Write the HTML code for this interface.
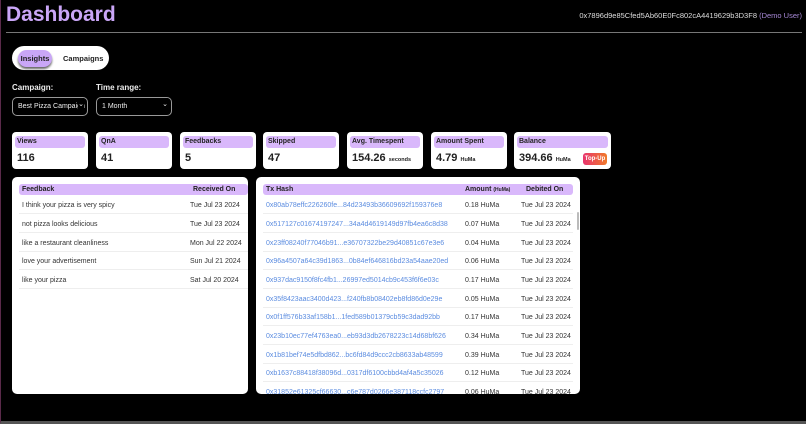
<!DOCTYPE html>
<html><head><style>
*{box-sizing:border-box;margin:0;padding:0}
body{width:806px;height:424px;background:#000;font-family:"Liberation Sans","DejaVu Sans",sans-serif;position:relative;overflow:hidden;color:#222}
.frame{position:absolute;left:0;top:0;width:806px;height:424px;border-left:1px solid #5a2a4a;border-bottom:3px solid #555}
h1{position:absolute;left:6px;top:3px;font-size:21px;font-weight:bold;color:#caa6f7}
.addr{position:absolute;right:4px;top:11px;font-size:7.5px;color:#ddd}
.addr span{color:#a889d8}
.hr{position:absolute;left:6px;top:32px;width:796px;height:1px;background:#777}
.tog{position:absolute;left:12px;top:46px;width:97px;height:24px;background:#fff;border-radius:12px}
.tog .a{position:absolute;left:6px;top:4px;width:34px;height:17px;background:#c9a6f7;border-radius:9px;font-size:7.5px;font-weight:bold;text-align:center;line-height:17px;box-shadow:0 2px 2px #666}
.tog .b{position:absolute;left:51px;top:4px;font-size:7.5px;font-weight:bold;line-height:17px}
.lbl{position:absolute;top:83px;font-size:8px;font-weight:bold;color:#eee}
.sel{position:absolute;top:97px;width:76px;height:19px;border:1px solid #999;border-radius:5px;color:#eee;font-size:7px;line-height:17px;padding-left:5px;white-space:nowrap;overflow:hidden}
.sel:after{content:"⌄";position:absolute;right:3px;top:-2px;font-size:7px;background:#000}
.card{position:absolute;top:132px;height:37px;background:#fff;border-radius:4px;width:76px}
.card .h{position:absolute;left:3px;top:4px;right:3px;height:12px;background:#d9b8fb;border-radius:3px;font-size:7px;font-weight:bold;padding-left:2px;line-height:12px}
.card .v{position:absolute;left:5px;top:20px;font-size:11px;font-weight:bold}
.card .v small{font-size:5.5px}
.topup{position:absolute;right:4px;top:21px;width:24px;height:12px;border-radius:3px;background:linear-gradient(90deg,#e8346e,#f07a2a);color:#fff;font-size:6px;font-weight:bold;text-align:center;line-height:12px}
.panel{position:absolute;top:177px;height:217px;background:#fff;border-radius:5px;overflow:hidden}
.ph{position:absolute;top:7px;height:11px;background:#d9b8fb;border-radius:3px;font-size:7px;font-weight:bold;line-height:11px}
.row{position:absolute;height:18.7px;border-bottom:1px solid #eee;font-size:7px;line-height:21px;color:#333}
.row span{position:absolute}
.tx{color:#5b8ce0}
</style></head><body>
<div class="frame"></div>
<h1>Dashboard</h1>
<div class="addr">0x7896d9e85Cfed5Ab60E0Fc802cA4419629b3D3F8 <span>(Demo User)</span></div>
<div class="hr"></div>
<div class="tog"><div class="a">Insights</div><div class="b">Campaigns</div></div>
<div class="lbl" style="left:12px">Campaign:</div>
<div class="lbl" style="left:96px">Time range:</div>
<div class="sel" style="left:12px">Best Pizza Campaign</div>
<div class="sel" style="left:96px">1 Month</div>
<div class="card" style="left:12px"><div class="h">Views</div><div class="v">116</div></div>
<div class="card" style="left:96px"><div class="h">QnA</div><div class="v">41</div></div>
<div class="card" style="left:180px"><div class="h">Feedbacks</div><div class="v">5</div></div>
<div class="card" style="left:263px"><div class="h">Skipped</div><div class="v">47</div></div>
<div class="card" style="left:347px"><div class="h">Avg. Timespent</div><div class="v">154.26 <small>seconds</small></div></div>
<div class="card" style="left:431px"><div class="h">Amount Spent</div><div class="v">4.79 <small>HuMa</small></div></div>
<div class="card" style="left:514px;width:97px"><div class="h">Balance</div><div class="v">394.66 <small>HuMa</small></div><div class="topup">Top-Up</div></div>

<div class="panel" style="left:12px;width:236px">
<div class="ph" style="left:7px;width:229px"><span style="position:absolute;left:3px">Feedback</span><span style="position:absolute;left:174px">Received On</span></div>
<div class="row" style="left:7px;width:229px;top:18px"><span style="left:3px">I think your pizza is very spicy</span><span style="left:171px">Tue Jul 23 2024</span></div>
<div class="row" style="left:7px;width:229px;top:37px"><span style="left:3px">not pizza looks delicious</span><span style="left:171px">Tue Jul 23 2024</span></div>
<div class="row" style="left:7px;width:229px;top:56px"><span style="left:3px">like a restaurant cleanliness</span><span style="left:171px">Mon Jul 22 2024</span></div>
<div class="row" style="left:7px;width:229px;top:74px"><span style="left:3px">love your advertisement</span><span style="left:171px">Sun Jul 21 2024</span></div>
<div class="row" style="left:7px;width:229px;top:93px"><span style="left:3px">like your pizza</span><span style="left:171px">Sat Jul 20 2024</span></div>
</div>

<div class="panel" style="left:256px;width:324px">
<div class="ph" style="left:7px;width:310px"><span style="position:absolute;left:3px">Tx Hash</span><span style="position:absolute;left:202px">Amount <small style="font-size:5px">(HuMa)</small></span><span style="position:absolute;left:263px">Debited On</span></div>
<div class="row" style="left:7px;width:310px;top:18px"><span class="tx" style="left:3px">0x80ab78effc226260fe...84d23493b36609692f159376e8</span><span style="left:202px">0.18 HuMa</span><span style="left:258px">Tue Jul 23 2024</span></div>
<div class="row" style="left:7px;width:310px;top:37px"><span class="tx" style="left:3px">0x517127c01674197247...34a4d4619149d97fb4ea6c8d38</span><span style="left:202px">0.07 HuMa</span><span style="left:258px">Tue Jul 23 2024</span></div>
<div class="row" style="left:7px;width:310px;top:56px"><span class="tx" style="left:3px">0x23ff08240f77046b91...e36707322be29d40851c67e3e6</span><span style="left:202px">0.04 HuMa</span><span style="left:258px">Tue Jul 23 2024</span></div>
<div class="row" style="left:7px;width:310px;top:74px"><span class="tx" style="left:3px">0x96a4507a64c39d1863...0b84ef646816bd23a54aae20ed</span><span style="left:202px">0.06 HuMa</span><span style="left:258px">Tue Jul 23 2024</span></div>
<div class="row" style="left:7px;width:310px;top:93px"><span class="tx" style="left:3px">0x937dac9150f8fc4fb1...26997ed5014cb9c453f6f6e03c</span><span style="left:202px">0.17 HuMa</span><span style="left:258px">Tue Jul 23 2024</span></div>
<div class="row" style="left:7px;width:310px;top:112px"><span class="tx" style="left:3px">0x35f8423aac3400d423...f240fb8b08402eb8fd86d0e29e</span><span style="left:202px">0.05 HuMa</span><span style="left:258px">Tue Jul 23 2024</span></div>
<div class="row" style="left:7px;width:310px;top:130px"><span class="tx" style="left:3px">0x0f1ff576b33af158b1...1fed589b01379cb59c3dad92bb</span><span style="left:202px">0.17 HuMa</span><span style="left:258px">Tue Jul 23 2024</span></div>
<div class="row" style="left:7px;width:310px;top:149px"><span class="tx" style="left:3px">0x23b10ec77ef4763ea0...eb93d3db2678223c14d68bf626</span><span style="left:202px">0.34 HuMa</span><span style="left:258px">Tue Jul 23 2024</span></div>
<div class="row" style="left:7px;width:310px;top:168px"><span class="tx" style="left:3px">0x1b81bef74e5dfbd862...bc6fd84d9ccc2cb8633ab48599</span><span style="left:202px">0.39 HuMa</span><span style="left:258px">Tue Jul 23 2024</span></div>
<div class="row" style="left:7px;width:310px;top:186px"><span class="tx" style="left:3px">0xb1637c88418f38096d...0317df6100cbbd4af4a5c35026</span><span style="left:202px">0.12 HuMa</span><span style="left:258px">Tue Jul 23 2024</span></div>
<div class="row" style="left:7px;width:310px;top:205px"><span class="tx" style="left:3px">0x31852e61325cf66630...c6e787d0266e387118ccfc2797</span><span style="left:202px">0.06 HuMa</span><span style="left:258px">Tue Jul 23 2024</span></div>
<div style="position:absolute;right:1px;top:35px;width:2px;height:18px;background:#bbb;border-radius:1px"></div>
</div>
</body></html>
